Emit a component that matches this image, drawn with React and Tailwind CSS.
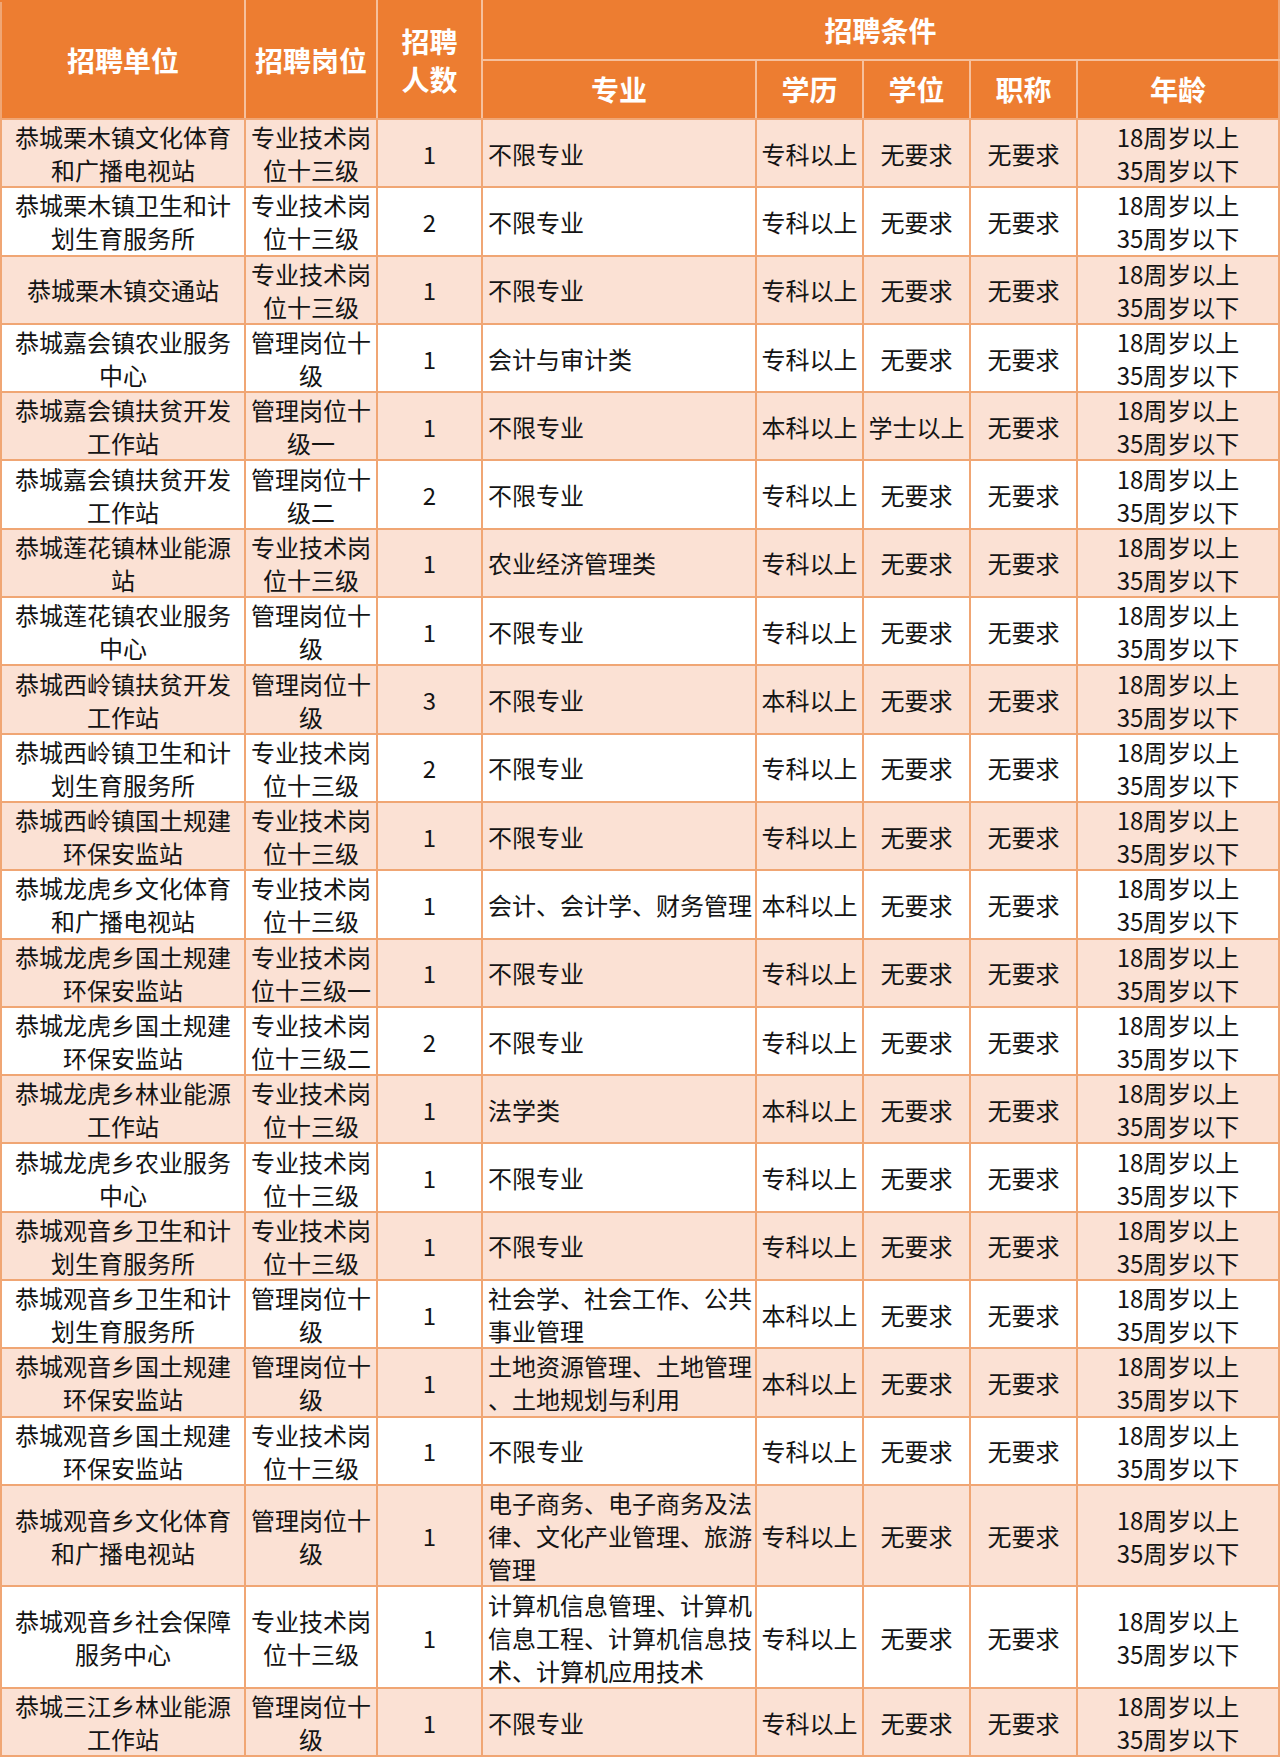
import React from 'react';

const rows = [
    { unit: ['恭城栗木镇文化体育', '和广播电视站'], post: ['专业技术岗', '位十三级'], n: 1, major: ['不限专业'], edu: '专科以上', deg: '无要求' },
    { unit: ['恭城栗木镇卫生和计', '划生育服务所'], post: ['专业技术岗', '位十三级'], n: 2, major: ['不限专业'], edu: '专科以上', deg: '无要求' },
    { unit: ['恭城栗木镇交通站'], post: ['专业技术岗', '位十三级'], n: 1, major: ['不限专业'], edu: '专科以上', deg: '无要求' },
    { unit: ['恭城嘉会镇农业服务', '中心'], post: ['管理岗位十', '级'], n: 1, major: ['会计与审计类'], edu: '专科以上', deg: '无要求' },
    { unit: ['恭城嘉会镇扶贫开发', '工作站'], post: ['管理岗位十', '级一'], n: 1, major: ['不限专业'], edu: '本科以上', deg: '学士以上' },
    { unit: ['恭城嘉会镇扶贫开发', '工作站'], post: ['管理岗位十', '级二'], n: 2, major: ['不限专业'], edu: '专科以上', deg: '无要求' },
    { unit: ['恭城莲花镇林业能源', '站'], post: ['专业技术岗', '位十三级'], n: 1, major: ['农业经济管理类'], edu: '专科以上', deg: '无要求' },
    { unit: ['恭城莲花镇农业服务', '中心'], post: ['管理岗位十', '级'], n: 1, major: ['不限专业'], edu: '专科以上', deg: '无要求' },
    { unit: ['恭城西岭镇扶贫开发', '工作站'], post: ['管理岗位十', '级'], n: 3, major: ['不限专业'], edu: '本科以上', deg: '无要求' },
    { unit: ['恭城西岭镇卫生和计', '划生育服务所'], post: ['专业技术岗', '位十三级'], n: 2, major: ['不限专业'], edu: '专科以上', deg: '无要求' },
    { unit: ['恭城西岭镇国土规建', '环保安监站'], post: ['专业技术岗', '位十三级'], n: 1, major: ['不限专业'], edu: '专科以上', deg: '无要求' },
    { unit: ['恭城龙虎乡文化体育', '和广播电视站'], post: ['专业技术岗', '位十三级'], n: 1, major: ['会计、会计学、财务管理'], edu: '本科以上', deg: '无要求' },
    { unit: ['恭城龙虎乡国土规建', '环保安监站'], post: ['专业技术岗', '位十三级一'], n: 1, major: ['不限专业'], edu: '专科以上', deg: '无要求' },
    { unit: ['恭城龙虎乡国土规建', '环保安监站'], post: ['专业技术岗', '位十三级二'], n: 2, major: ['不限专业'], edu: '专科以上', deg: '无要求' },
    { unit: ['恭城龙虎乡林业能源', '工作站'], post: ['专业技术岗', '位十三级'], n: 1, major: ['法学类'], edu: '本科以上', deg: '无要求' },
    { unit: ['恭城龙虎乡农业服务', '中心'], post: ['专业技术岗', '位十三级'], n: 1, major: ['不限专业'], edu: '专科以上', deg: '无要求' },
    { unit: ['恭城观音乡卫生和计', '划生育服务所'], post: ['专业技术岗', '位十三级'], n: 1, major: ['不限专业'], edu: '专科以上', deg: '无要求' },
    { unit: ['恭城观音乡卫生和计', '划生育服务所'], post: ['管理岗位十', '级'], n: 1, major: ['社会学、社会工作、公共', '事业管理'], edu: '本科以上', deg: '无要求' },
    { unit: ['恭城观音乡国土规建', '环保安监站'], post: ['管理岗位十', '级'], n: 1, major: ['土地资源管理、土地管理', '、土地规划与利用'], edu: '本科以上', deg: '无要求' },
    { unit: ['恭城观音乡国土规建', '环保安监站'], post: ['专业技术岗', '位十三级'], n: 1, major: ['不限专业'], edu: '专科以上', deg: '无要求' },
    { unit: ['恭城观音乡文化体育', '和广播电视站'], post: ['管理岗位十', '级'], n: 1, major: ['电子商务、电子商务及法', '律、文化产业管理、旅游', '管理'], edu: '专科以上', deg: '无要求' },
    { unit: ['恭城观音乡社会保障', '服务中心'], post: ['专业技术岗', '位十三级'], n: 1, major: ['计算机信息管理、计算机', '信息工程、计算机信息技', '术、计算机应用技术'], edu: '专科以上', deg: '无要求' },
    { unit: ['恭城三江乡林业能源', '工作站'], post: ['管理岗位十', '级'], n: 1, major: ['不限专业'], edu: '专科以上', deg: '无要求' }
];

const Lines = ({ items }) => items.map((t, i) => <div key={i} className="whitespace-nowrap">{t}</div>);

const td = 'border-2 border-[#F0A674] align-middle text-center p-0';
const th = 'border-2 border-[#F6C09C] align-middle text-center p-0 font-bold text-white';

export default function App() {
    return (
        <div className="bg-white w-[1280px]" style={{ fontFamily: '"Noto Sans CJK SC", sans-serif' }}>
            <table className="table-fixed border-collapse w-[1278px] text-[24px] leading-[33px] text-[#141414]">
                <colgroup>
                    <col className="w-[244px]" />
                    <col className="w-[132px]" />
                    <col className="w-[105px]" />
                    <col className="w-[274px]" />
                    <col className="w-[107px]" />
                    <col className="w-[107px]" />
                    <col className="w-[107px]" />
                    <col className="w-[202px]" />
                </colgroup>
                <thead className="bg-[#ED7D31] text-[28px]">
                    <tr className="h-[59px]">
                        <th rowSpan={2} className={th + ' border-l-[#F0A674] border-t-[#ED7D31] border-b-[#F0A674]'}>招聘单位</th>
                        <th rowSpan={2} className={th + ' border-t-[#ED7D31] border-b-[#F0A674]'}>招聘岗位</th>
                        <th rowSpan={2} className={th + ' leading-[38px] border-t-[#ED7D31] border-b-[#F0A674]'}>
                            <div>招聘</div>
                            <div>人数</div>
                        </th>
                        <th colSpan={5} className={th + ' border-t-[#ED7D31] border-r-[#F0A674]'}>招聘条件</th>
                    </tr>
                    <tr className="h-[59px]">
                        <th className={th + ' border-b-[#F0A674]'}>专业</th>
                        <th className={th + ' border-b-[#F0A674]'}>学历</th>
                        <th className={th + ' border-b-[#F0A674]'}>学位</th>
                        <th className={th + ' border-b-[#F0A674]'}>职称</th>
                        <th className={th + ' border-b-[#F0A674] border-r-[#F0A674]'}>年龄</th>
                    </tr>
                </thead>
                <tbody>
                    {rows.map((r, i) => (
                        <tr
                            key={i}
                            className={(i % 2 === 0 ? 'bg-[#FBE1D4] ' : 'bg-white ') + (r.major.length === 3 ? 'h-[101.5px]' : 'h-[68.3px]')}
                        >
                            <td className={td}><Lines items={r.unit} /></td>
                            <td className={td}><Lines items={r.post} /></td>
                            <td className={td}>{r.n}</td>
                            <td className={td + ' text-left pl-[5px]'}><Lines items={r.major} /></td>
                            <td className={td + ' whitespace-nowrap'}>{r.edu}</td>
                            <td className={td + ' whitespace-nowrap'}>{r.deg}</td>
                            <td className={td}>无要求</td>
                            <td className={td}>
                                <div>18周岁以上</div>
                                <div>35周岁以下</div>
                            </td>
                        </tr>
                    ))}
                </tbody>
            </table>
        </div>
    );
}
